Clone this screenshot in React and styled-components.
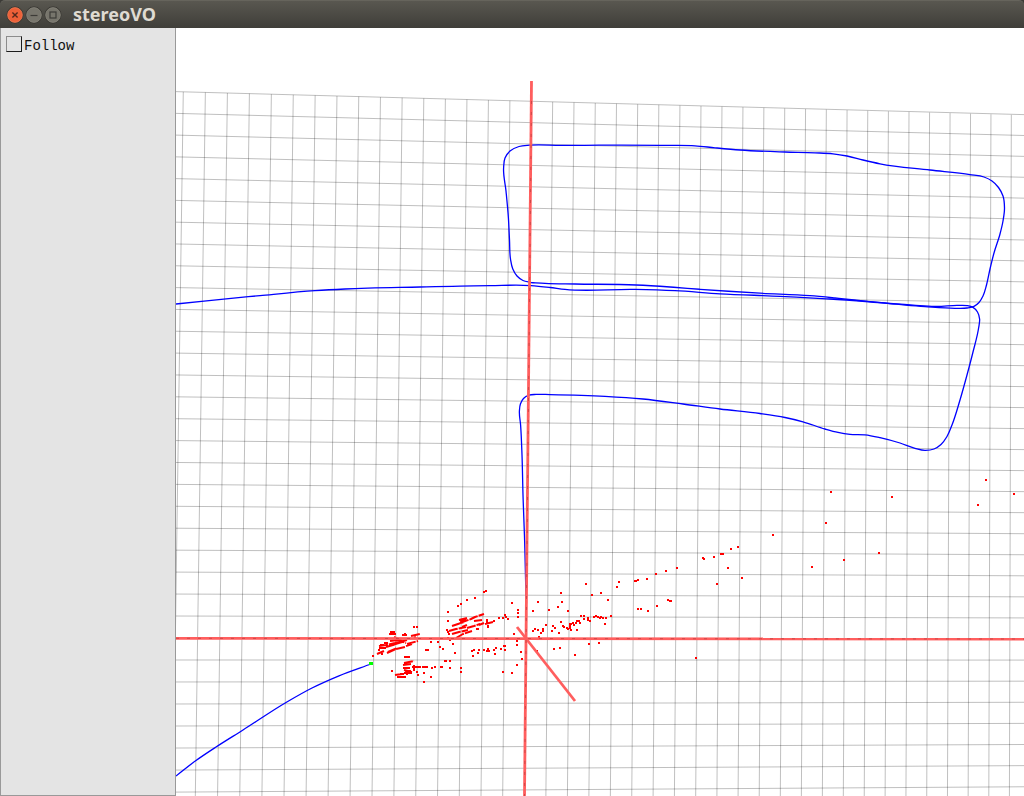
import React from "react";
import styled, { createGlobalStyle } from "styled-components";

const GlobalStyle = createGlobalStyle`
  * { box-sizing: border-box; }
  html, body, #root { height: 100%; }
  body { margin: 0; background: #ffffff; overflow: hidden; }
`;

const Window = styled.div`
  display: flex;
  flex-direction: column;
  height: 100%;
  background: #3c3b37;
`;

const TitleBar = styled.header`
  display: flex;
  align-items: center;
  gap: 11px;
  height: 28px;
  flex: none;
  padding: 0 6px;
  border-top: 1px solid #66645c;
  border-radius: 5px 5px 0 0;
  background: linear-gradient(#595750, #3f3e39);
`;

const Controls = styled.div`
  display: flex;
  gap: 1px;
`;

const ControlButton = styled.button`
  display: block;
  width: 18px;
  height: 18px;
  padding: 0;
  border: 0;
  background: none;

  svg { display: block; }
`;

const Title = styled.h1`
  margin: 0 0 2px;
  color: #dfdbd2;
  font: 700 18px/24px "Noto Sans", "Open Sans", sans-serif;
`;

const Body = styled.div`
  display: flex;
  flex: 1;
  min-height: 0;
`;

const Panel = styled.aside`
  flex: none;
  width: 176px;
  padding: 8px 5px;
  background: #e4e4e4;
  border: 1px solid #999999;
  border-top: 0;
`;

const CheckLabel = styled.label`
  display: flex;
  align-items: flex-start;
  gap: 2px;
  color: #111111;
  font: 14px/20px "Liberation Mono", monospace;
`;

const CheckBox = styled.input`
  appearance: none;
  width: 16px;
  height: 16px;
  margin: 0;
  border: 1px solid;
  border-color: #8c8c8c #1c1c1c #1c1c1c #8c8c8c;
  background: #e4e4e4;

  &:checked { background: #555555; }
`;

const Viewport = styled.main`
  flex: 1;
  min-width: 0;
  background: #ffffff;
`;

const Scene = styled.svg`
  display: block;
  width: 100%;
  height: 100%;
`;

const rows = Array.from({ length: 33 }, (_, i) => i - 25)
  .filter((k) => k !== 0)
  .map((k) => ({ k, left: 638 + 21.98 * k + 0.005 * k * k, right: 639 + 21.08 * k + 0.0042 * k * k }));

const columns = Array.from({ length: 40 }, (_, i) => i - 16)
  .filter((j) => j !== 0)
  .map((j) => ({
    j,
    top: 531.3 + 21.39 * j - 0.02256 * j * j,
    bottom: 524.3 + 21.6 * j - 0.0221 * j * j,
    y: 101.3 + 0.59 * j,
  }));

// Smooth curve through the points; each tangent leans towards its nearer neighbour.
function smooth(points) {
  const n = points.length;
  const step = (i) => {
    const dx = points[i + 1][0] - points[i][0];
    const dy = points[i + 1][1] - points[i][1];
    const len = Math.hypot(dx, dy);
    return { x: dx / len, y: dy / len, len };
  };
  const tangents = points.map((_, i) => {
    if (i === 0) return step(0);
    if (i === n - 1) return step(n - 2);
    const p = step(i - 1);
    const q = step(i);
    const x = p.x * q.len + q.x * p.len;
    const y = p.y * q.len + q.y * p.len;
    const len = Math.hypot(x, y);
    return { x: x / len, y: y / len };
  });
  let d = `M${points[0][0]} ${points[0][1]}`;
  for (let i = 0; i < n - 1; i++) {
    const s = step(i).len / 3;
    const [bx, by] = points[i];
    const [cx, cy] = points[i + 1];
    const t = tangents[i];
    const u = tangents[i + 1];
    d += `C${bx + t.x * s} ${by + t.y * s} ${cx - u.x * s} ${cy - u.y * s} ${cx} ${cy}`;
  }
  return d;
}

const trajectory = [
  [[526, 598], [524.6, 540], [523, 495], [522, 455], [520.6, 425], [519.4, 411], [520.4, 404], [523.5, 398.5], [529, 395.2], [536, 394.4], [550, 394.6], [605, 396.3], [643, 399], [683, 404], [720, 409], [760, 413.5], [785, 417.5], [803, 421.8], [825, 429], [838, 432.4], [850, 434.3], [865, 434.8], [880, 437.6], [900, 443], [915, 448.3], [925, 450.4], [934, 449], [941, 444.5], [947, 436.5], [952, 425], [960, 400], [967, 375], [973, 352], [978.6, 328], [979.6, 319], [977.5, 312], [973, 307.4], [967, 305.6], [957, 305.4], [937, 306.4], [920, 305.6], [885, 303], [830, 299], [780, 296.3], [720, 293.8], [675, 290.7], [635, 289.4], [565, 289.4], [550, 287.5], [531, 285.6], [490, 285.6], [420, 287], [345, 289], [315, 290.7], [260, 295.6], [176, 304]],
  [[531, 282.5], [545, 283.4], [575, 284], [636, 285], [670, 287], [700, 289.3], [760, 293.2], [810, 295.7], [835, 298], [870, 301.7], [925, 306.7], [955, 308.3], [967, 308], [974, 306.4], [979, 302.5], [983, 296], [986.5, 285], [990, 269], [994, 253], [1000, 234], [1003, 221], [1004.5, 208], [1003, 196], [998.5, 187.5], [992, 181], [984, 177], [970, 174.6], [930, 170], [880, 163.8], [863, 160], [847, 156], [833, 153.8], [815, 152.8], [785, 152], [740, 150], [715, 147.8], [695, 145.8], [670, 145.4], [600, 145.2], [560, 145.4], [530, 145.2], [519, 146.5], [510, 151], [505, 158], [503.6, 168], [506, 191], [508.4, 218], [509.5, 240], [510.5, 259], [512.8, 269], [517, 276], [523, 280.5], [531, 282.5]],
  [[371, 664], [339, 675.8], [312, 688], [286, 702.5], [243, 730], [216, 747], [196, 760.5], [176, 776]],
];

const landmarks = [
  [486, 591], [484, 592], [475, 598], [467, 600], [461, 604], [458, 606], [448, 612], [448, 621], [512, 603],
  [518, 610], [518, 613], [518, 617], [505, 615], [506, 617], [508, 619], [499, 618], [503, 618], [514, 634],
  [517, 641], [517, 645], [521, 652], [522, 659], [517, 665], [512, 673], [503, 672], [505, 646], [504, 646],
  [501, 649], [505, 650], [496, 648], [494, 650], [489, 651], [488, 649], [487, 651], [495, 654], [484, 650],
  [479, 650], [478, 653], [474, 650], [472, 651], [473, 656], [455, 653], [443, 649], [440, 647], [438, 642],
  [431, 642], [448, 638], [450, 640], [453, 644], [428, 650], [426, 650], [461, 668], [461, 672], [450, 668],
  [450, 661], [446, 661], [445, 661], [442, 667], [441, 667], [435, 667], [432, 668], [431, 677], [424, 682],
  [424, 673], [417, 672], [418, 675], [414, 627], [417, 627], [373, 656], [382, 654], [392, 671],
  [447, 630], [448, 632], [449, 634],
  [561, 593], [562, 602], [558, 607], [568, 611], [549, 610], [538, 602], [533, 611], [586, 584], [592, 595],
  [601, 593], [608, 600], [617, 587], [619, 582], [635, 581], [636, 581], [638, 580], [647, 579], [656, 574],
  [666, 571], [677, 568], [638, 609], [641, 609], [648, 611], [657, 606], [668, 600], [670, 601], [671, 601],
  [717, 584], [742, 578], [728, 568], [703, 558], [704, 559], [714, 557], [721, 554], [723, 554], [731, 549],
  [738, 547], [773, 535], [812, 567], [844, 560], [879, 553], [826, 523], [831, 492], [892, 497], [978, 505],
  [986, 480], [1014, 494], [696, 658], [575, 655], [589, 644], [599, 643], [554, 649], [560, 648], [537, 651],
  [605, 624], [611, 616], [606, 618], [603, 618], [601, 617], [600, 618], [598, 617], [596, 616], [594, 617],
  [590, 621], [588, 620], [588, 618], [584, 619], [584, 616], [581, 616], [580, 623], [577, 621], [576, 623],
  [577, 630], [574, 625], [571, 624], [570, 626], [570, 628], [568, 629], [571, 630], [567, 628], [563, 626],
  [564, 627], [561, 622], [555, 628], [553, 626], [552, 631], [559, 633], [546, 625], [543, 629], [543, 631],
  [541, 633], [538, 630], [535, 629], [533, 631], [539, 637], [530, 639], [579, 621], [573, 623], [570, 624],
];

const clusters = [
  "M389 634H396M390 632H395M402 635H407M404 634H406M411 636L420 634M414 638L416 637M407 644L418 641M406 646L412 644",
  "M379 646L386 645L395 643L407 640M379 648H386M386 647L393 645L402 642M384 643L388 643M390 641L398 640M378 650H380M377 654L384 651M387 653L396 649L405 647M388 652L397 648M393 645L399 642M394 637L402 641M380 645H384M396 639L406 643",
  "M404 657H410M404 663L414 661M403 665L411 664M405 668H410M404 670L412 672M404 673H412M407 671V675M404 667V669M405 671H411M412 667H428M434 667H436M414 665V671M395 675L402 674M397 677L406 677M400 674H404",
  "M452 626L458 624L464 622M460 623L471 619L475 617L484 614M460 621L466 619M449 631L456 629L466 627M452 634L459 632L468 630M456 638L463 634L472 631M467 628L474 626L480 624M459 620L467 618M462 627L467 625M474 621L482 620M479 625L484 623M485 624L493 622M488 625V628M493 621H495M487 619V623M476 629H479",
];

function CloseIcon() {
  return (
    <svg width="18" height="18" viewBox="0 0 18 18" aria-hidden="true">
      <circle cx="9" cy="9" r="8.4" fill="#34332e" />
      <circle cx="9" cy="9" r="7.4" fill="#ed6038" stroke="#f1815a" strokeWidth="0.7" />
      <path d="M6.4 6.4l5.2 5.2M11.6 6.4l-5.2 5.2" stroke="#55291c" strokeWidth="1.4" />
    </svg>
  );
}

function GreyIcon({ children }) {
  return (
    <svg width="18" height="18" viewBox="0 0 18 18" aria-hidden="true">
      <circle cx="9" cy="9" r="8.4" fill="#34332e" />
      <circle cx="9" cy="9" r="7.4" fill="#77756c" stroke="#8c8a80" strokeWidth="0.7" />
      {children}
    </svg>
  );
}

function Plot() {
  return (
    <Scene viewBox="176 28 848 768" preserveAspectRatio="xMidYMid slice" role="img" aria-label="Camera trajectory and landmarks">
      <g stroke="#000000" strokeOpacity="0.25" strokeWidth="1">
        {rows.map((r) => (
          <line key={r.k} x1="176" x2="1024" y1={r.left} y2={r.right} />
        ))}
        {columns.map((c) => (
          <line key={c.j} x1={c.top} x2={c.bottom} y1={c.y} y2="796" />
        ))}
      </g>
      <g stroke="#0000ff" strokeWidth="1.3" fill="none">
        {trajectory.map((t, i) => (
          <path key={i} d={smooth(t)} />
        ))}
      </g>
      <g fill="#ff0000">
        {landmarks.map(([x, y], i) => (
          <rect key={i} x={x - 1} y={y - 1} width="2" height="2" />
        ))}
      </g>
      <g stroke="#ff0000" strokeWidth="2" fill="none" strokeDasharray="9 1" strokeLinejoin="round">
        {clusters.map((d, i) => (
          <path key={i} d={d} />
        ))}
      </g>
      <g stroke="#ff5e5e" strokeWidth="2.8">
        <path d="M531.5 81L524.5 796" />
        <path d="M176 638.3L1024 639" />
        <path d="M517 627L575 701" />
      </g>
      <path d="M531.5 101L524.5 796M176 638.3L1024 639" stroke="#a03030" strokeWidth="1" strokeOpacity="0.5" strokeDasharray="3 8" />
      <rect x="369" y="662" width="4" height="3" fill="#00ff00" />
    </Scene>
  );
}

export default function App() {
  return (
    <Window>
      <GlobalStyle />
      <TitleBar>
        <Controls>
          <ControlButton aria-label="Close"><CloseIcon /></ControlButton>
          <ControlButton aria-label="Minimize">
            <GreyIcon><path d="M5.5 9.5h7" stroke="#3c3b37" strokeWidth="1.2" /></GreyIcon>
          </ControlButton>
          <ControlButton aria-label="Maximize">
            <GreyIcon><rect x="6" y="6" width="6" height="6" fill="none" stroke="#3c3b37" strokeWidth="1.2" /></GreyIcon>
          </ControlButton>
        </Controls>
        <Title>stereoVO</Title>
      </TitleBar>
      <Body>
        <Panel>
          <CheckLabel>
            <CheckBox type="checkbox" />
            Follow
          </CheckLabel>
        </Panel>
        <Viewport>
          <Plot />
        </Viewport>
      </Body>
    </Window>
  );
}
